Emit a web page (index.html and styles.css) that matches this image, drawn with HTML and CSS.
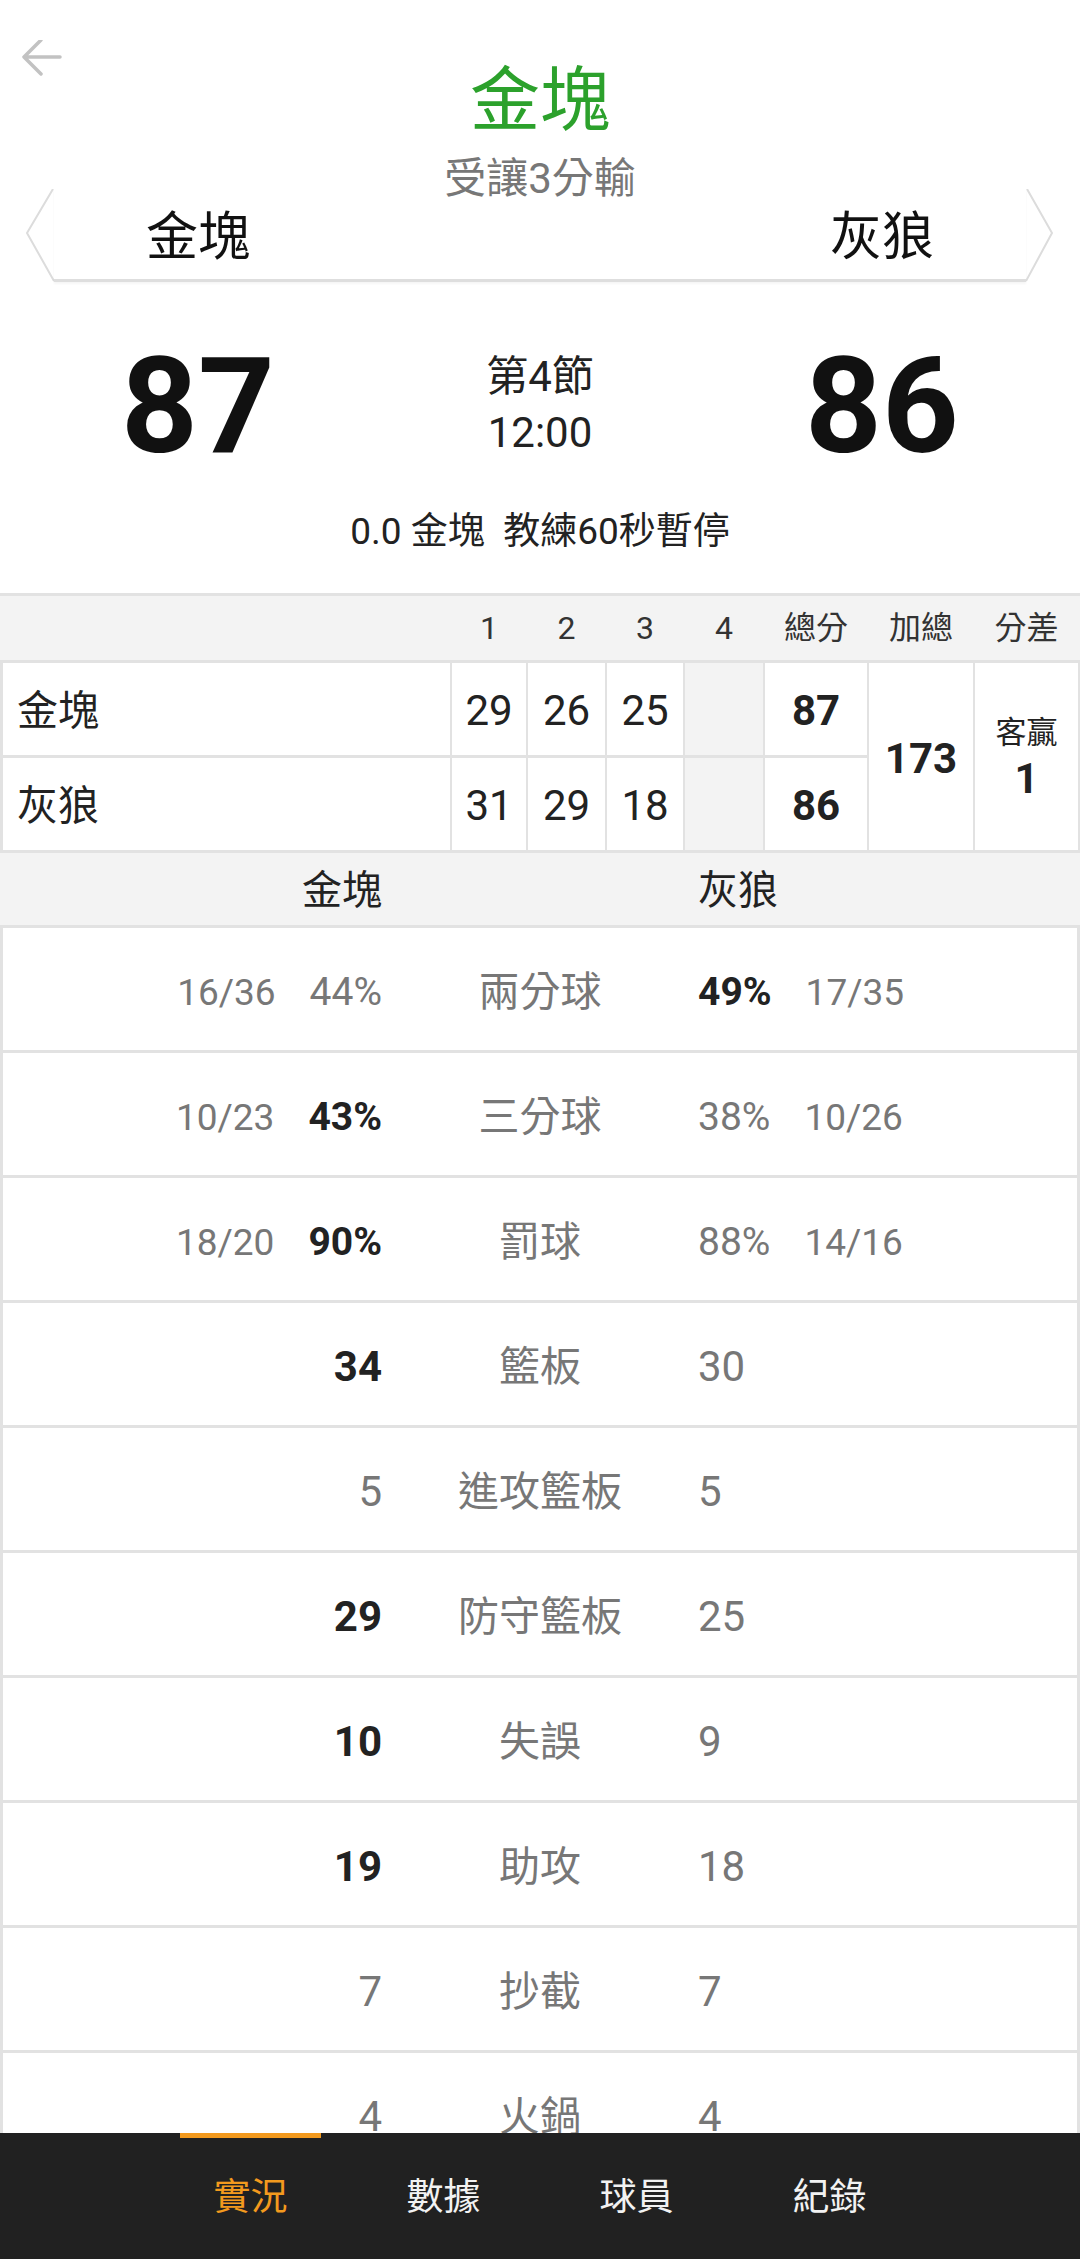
FILE: index.html
```html
<!DOCTYPE html>
<html lang="zh-Hant">
<head>
<meta charset="utf-8">
<title>金塊 vs 灰狼</title>
<link rel="stylesheet" href="styles.css">
</head>
<body>
<div class="app">
  <main class="content">
    <header class="hdr">
      <div class="topbar">
        <span class="back" aria-label="返回">
          <svg width="84" height="50" viewBox="0 0 84 50"><path d="M60 17 H25 M41 0 L24 17 L41 34" fill="none" stroke="#c2c2c2" stroke-width="3.5" stroke-linecap="round" stroke-linejoin="round"/></svg>
        </span>
        <h1 class="title">金塊</h1>
        <span class="spacer"></span>
      </div>
      <div class="handicap">受讓3分輸</div>
      <div class="teams">
        <svg class="chev" width="28" height="93" viewBox="0 0 28 93"><path d="M27 0 L1 44 L28 92" fill="none" stroke="#dcdcdc" stroke-width="2"/></svg>
        <div class="teams-mid"><span>金塊</span><span>灰狼</span></div>
        <svg class="chev" width="28" height="93" viewBox="0 0 28 93"><path d="M1 0 L26 44 L0 92" fill="none" stroke="#dcdcdc" stroke-width="2"/></svg>
      </div>
    </header>

    <section class="score">
      <div class="big">87</div>
      <div class="period">
        <div class="p-line">第4節</div>
        <div class="p-line">12:00</div>
      </div>
      <div class="big">86</div>
    </section>
    <div class="event">0.0 金塊&nbsp; 教練60秒暫停</div>

    <section class="box">
      <div class="box-head">
        <span></span><span>1</span><span>2</span><span>3</span><span>4</span><span>總分</span><span>加總</span><span>分差</span>
      </div>
      <div class="box-body">
        <div class="cell name">金塊</div>
        <div class="cell">29</div>
        <div class="cell">26</div>
        <div class="cell">25</div>
        <div class="cell empty"></div>
        <div class="cell strong">87</div>
        <div class="cell strong span2">173</div>
        <div class="cell span2 diff"><span class="diff-lbl">客贏</span><span class="strong">1</span></div>
        <div class="cell name">灰狼</div>
        <div class="cell">31</div>
        <div class="cell">29</div>
        <div class="cell">18</div>
        <div class="cell empty"></div>
        <div class="cell strong">86</div>
      </div>
    </section>

    <div class="band"><span class="l">金塊</span><span></span><span class="r">灰狼</span></div>

    <div class="stats">
      <div class="row">
        <div class="side l"><span class="frac">16/36</span><span class="pct">44%</span></div>
        <div class="lbl">兩分球</div>
        <div class="side r"><span class="pct win">49%</span><span class="frac">17/35</span></div>
      </div>
      <div class="row">
        <div class="side l"><span class="frac">10/23</span><span class="pct win">43%</span></div>
        <div class="lbl">三分球</div>
        <div class="side r"><span class="pct">38%</span><span class="frac">10/26</span></div>
      </div>
      <div class="row">
        <div class="side l"><span class="frac">18/20</span><span class="pct win">90%</span></div>
        <div class="lbl">罰球</div>
        <div class="side r"><span class="pct">88%</span><span class="frac">14/16</span></div>
      </div>
      <div class="row">
        <div class="side l"><span class="val win">34</span></div>
        <div class="lbl">籃板</div>
        <div class="side r"><span class="val">30</span></div>
      </div>
      <div class="row">
        <div class="side l"><span class="val">5</span></div>
        <div class="lbl">進攻籃板</div>
        <div class="side r"><span class="val">5</span></div>
      </div>
      <div class="row">
        <div class="side l"><span class="val win">29</span></div>
        <div class="lbl">防守籃板</div>
        <div class="side r"><span class="val">25</span></div>
      </div>
      <div class="row">
        <div class="side l"><span class="val win">10</span></div>
        <div class="lbl">失誤</div>
        <div class="side r"><span class="val">9</span></div>
      </div>
      <div class="row">
        <div class="side l"><span class="val win">19</span></div>
        <div class="lbl">助攻</div>
        <div class="side r"><span class="val">18</span></div>
      </div>
      <div class="row">
        <div class="side l"><span class="val">7</span></div>
        <div class="lbl">抄截</div>
        <div class="side r"><span class="val">7</span></div>
      </div>
      <div class="row">
        <div class="side l"><span class="val">4</span></div>
        <div class="lbl">火鍋</div>
        <div class="side r"><span class="val">4</span></div>
      </div>
      <div class="row">
        <div class="side l"><span class="val">18</span></div>
        <div class="lbl">犯規</div>
        <div class="side r"><span class="val win">21</span></div>
      </div>
    </div>
  </main>

  <nav class="tabs">
    <div class="tab active"><span class="ind"></span><span class="tab-lbl">實況</span></div>
    <div class="tab"><span class="ind"></span><span class="tab-lbl">數據</span></div>
    <div class="tab"><span class="ind"></span><span class="tab-lbl">球員</span></div>
    <div class="tab"><span class="ind"></span><span class="tab-lbl">紀錄</span></div>
  </nav>
</div>
</body>
</html>
```

FILE: styles.css
```css
* { box-sizing: border-box; }
html, body {
  margin: 0;
  padding: 0;
  background: #ffffff;
}
body {
  font-family: Roboto, "Noto Sans CJK TC", "Noto Sans", sans-serif;
  color: #222;
}
.app {
  height: 100vh;
  display: flex;
  flex-direction: column;
  overflow: hidden;
}
.content {
  flex: 1;
  overflow: hidden;
}

/* header */
.hdr { height: 280px; }
.topbar {
  display: grid;
  grid-template-columns: 84px 1fr 84px;
  align-items: start;
}
.back {
  display: block;
  margin-top: 40px;
  height: 50px;
}
.back svg { display: block; }
.title {
  margin: 66px 0 0;
  text-align: center;
  font-size: 70px;
  line-height: 70px;
  font-weight: 400;
  color: #2ca12c;
}
.handicap {
  margin-top: 22px;
  text-align: center;
  font-size: 42px;
  line-height: 42px;
  color: #777;
}
.teams {
  margin: -11px 26px 0 26px;
  height: 93px;
  display: flex;
}
.chev { display: block; flex: none; }
.teams-mid {
  flex: 1;
  border-bottom: 3px solid #dedede;
  box-shadow: 0 2px 2px rgba(0,0,0,0.04);
  display: flex;
  justify-content: space-between;
  align-items: center;
  padding: 8px 92px 0;
  font-size: 52px;
  line-height: 52px;
  color: #111;
}

/* score */
.score {
  display: grid;
  grid-template-columns: 396px 1fr 396px;
  align-items: center;
  padding-top: 60px;
}
.big {
  text-align: center;
  font-size: 134px;
  line-height: 134px;
  font-weight: 700;
  color: #111;
}
.period {
  display: flex;
  flex-direction: column;
  align-items: center;
  gap: 14px;
  font-size: 42px;
  line-height: 42px;
  color: #222;
  margin-top: -4px;
}
.event {
  margin-top: 39px;
  padding-bottom: 43px;
  text-align: center;
  font-size: 37px;
  line-height: 37px;
  color: #222;
}

/* box score */
.box-head,
.box-body {
  display: grid;
  grid-template-columns: 447px 74px 77px 76px 78px 102px 104px 103px;
  column-gap: 2px;
  padding: 0 2px 0 3px;
}
.box-head {
  height: 70px;
  background: #f3f3f3;
  border-top: 3px solid #e2e2e2;
  border-bottom: 3px solid #e2e2e2;
  align-items: center;
  font-size: 32px;
  line-height: 32px;
  color: #333;
  text-align: center;
}
.box-body {
  grid-template-rows: 92px 92px;
  row-gap: 3px;
  padding-bottom: 3px;
  background: #e2e2e2;
}
.cell {
  background: #fff;
  display: flex;
  align-items: center;
  justify-content: center;
  font-size: 42px;
  line-height: 42px;
  color: #222;
  padding-top: 4px;
}
.cell.name {
  justify-content: flex-start;
  padding-left: 14px;
  font-size: 41px;
}
.cell.empty { background: #f3f3f3; }
.strong { font-weight: 700; }
.span2 { grid-row: span 2; }
.cell.diff {
  flex-direction: column;
  gap: 10px;
}
.diff-lbl {
  font-size: 31px;
  line-height: 31px;
  color: #222;
}

/* team band */
.band {
  height: 75px;
  background: #f3f3f3;
  border-bottom: 3px solid #e2e2e2;
  display: grid;
  grid-template-columns: 1fr 316px 1fr;
  align-items: center;
  font-size: 40px;
  line-height: 40px;
  color: #222;
  padding-top: 4px;
}
.band .l { text-align: right; }
.band .r { text-align: left; }

/* stats */
.stats {
  background: #e2e2e2;
  padding: 0 3px;
  display: flex;
  flex-direction: column;
  gap: 3px;
}
.row {
  height: 122px;
  flex: none;
  background: #fff;
  display: grid;
  grid-template-columns: 1fr 316px 1fr;
  align-items: center;
  padding-top: 6px;
}
.side {
  display: flex;
  align-items: center;
  gap: 34px;
}
.side.l { justify-content: flex-end; }
.side.r { justify-content: flex-start; }
.lbl {
  text-align: center;
  font-size: 41px;
  line-height: 41px;
  color: #777;
}
.frac {
  font-size: 37px;
  line-height: 37px;
  color: #777;
}
.pct {
  font-size: 39px;
  line-height: 39px;
  color: #777;
}
.val {
  font-size: 42px;
  line-height: 42px;
  color: #777;
}
.win {
  color: #222;
  font-weight: 700;
}

/* bottom tabs */
.tabs {
  flex: none;
  height: 126px;
  background: #212121;
  display: flex;
  justify-content: center;
}
.tab {
  width: 193px;
  display: flex;
  flex-direction: column;
  align-items: center;
}
.ind {
  width: 141px;
  height: 5px;
  flex: none;
}
.tab.active .ind { background: #f39a1e; }
.tab-lbl {
  flex: 1;
  display: flex;
  align-items: center;
  font-size: 37px;
  line-height: 37px;
  color: #f2f2f2;
  padding-bottom: 3px;
}
.tab.active .tab-lbl { color: #f39a1e; }
```
